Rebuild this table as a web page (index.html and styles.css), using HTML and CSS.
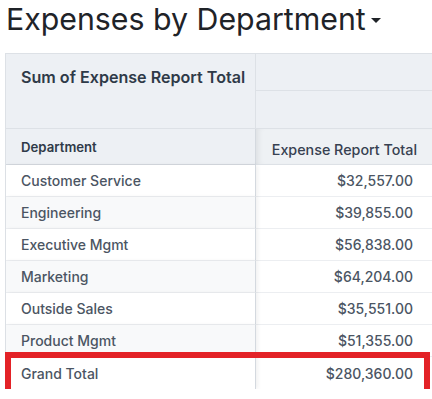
FILE: index.html
```html
<!DOCTYPE html>
<html>
<head>
<meta charset="utf-8">
<link rel="stylesheet" href="styles.css">
</head>
<body>
<div class="page">
  <h1 class="title">Expenses by Department<span class="caret"></span></h1>
  <div class="pivot">
    <div class="grid">
      <div class="cell head-left">Sum of Expense Report Total</div>
      <div class="cell head-right-top"></div>
      <div class="cell head-right-mid"></div>
      <div class="cell dept-head">Department</div>
      <div class="cell col-head">Expense Report Total</div>

      <div class="cell name">Customer Service</div>
      <div class="cell val">$32,557.00</div>
      <div class="cell name alt">Engineering</div>
      <div class="cell val">$39,855.00</div>
      <div class="cell name">Executive Mgmt</div>
      <div class="cell val">$56,838.00</div>
      <div class="cell name alt">Marketing</div>
      <div class="cell val">$64,204.00</div>
      <div class="cell name">Outside Sales</div>
      <div class="cell val">$35,551.00</div>
      <div class="cell name alt">Product Mgmt</div>
      <div class="cell val">$51,355.00</div>
      <div class="cell name total">Grand Total</div>
      <div class="cell val total">$280,360.00</div>
    </div>
    <div class="highlight"></div>
  </div>
</div>
</body>
</html>
```

FILE: styles.css
```css
html, body {
  margin: 0;
  padding: 0;
  background: #ffffff;
  overflow: hidden;
}
body {
  font-family: Inter, "Noto Sans", sans-serif;
  color: #374151;
}
.page {
  padding: 0 0 0 5px;
}
.title {
  margin: 0;
  padding: 1px 0 0 1px;
  height: 52px;
  font-size: 30.3px;
  font-weight: 400;
  line-height: 36px;
  color: #1f2328;
  letter-spacing: 0;
}
.caret {
  display: inline-block;
  width: 0;
  height: 0;
  margin-left: 5px;
  vertical-align: 7px;
  border-left: 5px solid transparent;
  border-right: 5px solid transparent;
  border-top: 5px solid #1f2328;
}
.pivot {
  position: relative;
}
.grid {
  display: grid;
  grid-template-columns: 250px 177px;
  grid-template-rows: 37px 38px 36px repeat(7, 32px);
  border-top: 1px solid #dde1e6;
  border-left: 1px solid #dde1e6;
}
.cell {
  box-sizing: border-box;
  display: flex;
  align-items: center;
  font-size: 14px;
  white-space: nowrap;
}
.head-left {
  grid-row: 1 / 3;
  grid-column: 1;
  align-items: flex-start;
  padding: 13px 0 0 15px;
  background: #edf0f4;
  font-size: 16.1px;
  font-weight: 600;
  color: #2f3a48;
  border-right: 1px solid #dde1e6;
  border-bottom: 1px solid #dde1e6;
}
.head-right-top {
  grid-row: 1;
  grid-column: 2;
  background: #edf0f4;
  border-bottom: 1px solid #dde1e6;
}
.head-right-mid {
  grid-row: 2;
  grid-column: 2;
  background: #edf0f4;
  border-bottom: 1px solid #dde1e6;
}
.dept-head {
  padding-left: 15px;
  padding-top: 1px;
  background: #edf0f4;
  font-size: 13.2px;
  font-weight: 600;
  color: #2f3a48;
  border-right: 1px solid #d4d9df;
  border-bottom: 1px solid #d4d9df;
}
.col-head {
  justify-content: flex-end;
  padding-right: 16px;
  padding-top: 6px;
  background: #eef1f4;
  font-size: 14.3px;
  font-weight: 500;
  color: #374151;
  border-bottom: 1px solid #dde1e6;
  box-shadow: inset 6px 0 6px -4px rgba(0,0,0,0.08);
}
.name {
  padding-left: 15px;
  color: #4b5563;
  font-weight: 500;
  background: #ffffff;
  border-right: 1px solid #d4d9df;
  border-bottom: 1px solid #eceef1;
  box-shadow: 2px 0 4px rgba(0,0,0,0.06);
  position: relative;
  z-index: 1;
}
.name.alt {
  background: #f8f9fa;
}
.val {
  justify-content: flex-end;
  padding-right: 20px;
  color: #4b5563;
  font-weight: 500;
  background: #ffffff;
  border-bottom: 1px solid #eceef1;
}
.total {
  border-bottom: none;
}
.highlight {
  position: absolute;
  left: 0;
  top: 299px;
  width: 425px;
  height: 47px;
  box-sizing: border-box;
  border: 6px solid #e32227;
  z-index: 2;
}
```
